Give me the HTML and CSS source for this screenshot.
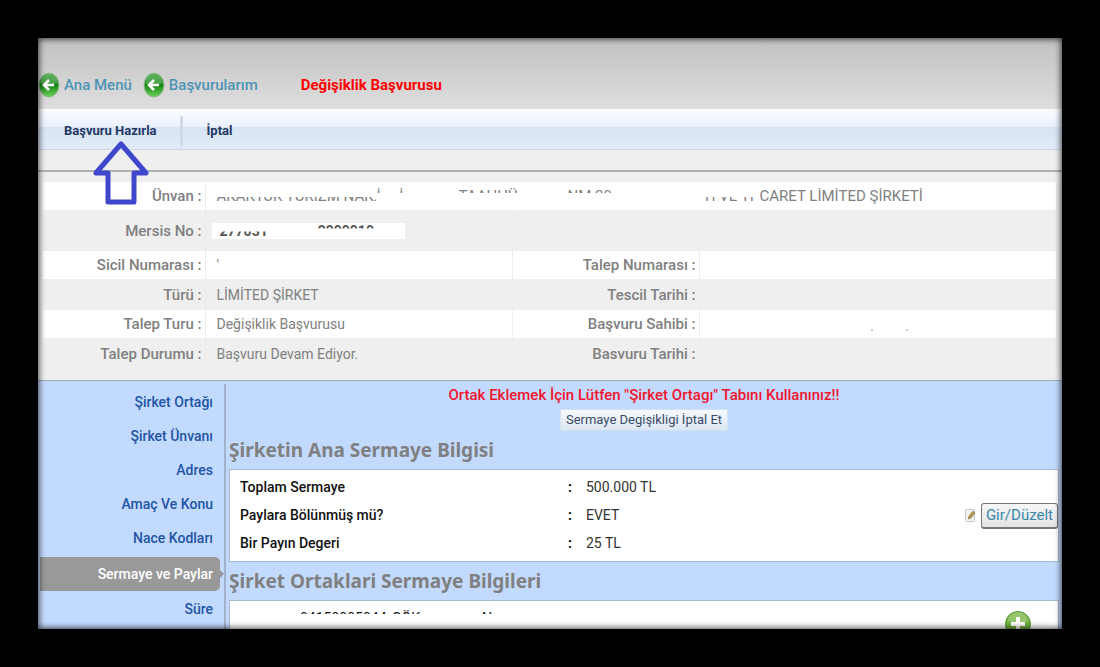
FILE: index.html
```html
<!DOCTYPE html>
<html lang="tr">
<head>
<meta charset="utf-8">
<title>Değişiklik Başvurusu</title>
<link rel="stylesheet" href="styles.css">
</head>
<body>
<svg class="defs" width="0" height="0" aria-hidden="true">
  <defs>
    <linearGradient id="ball" x1="0" y1="0" x2="0" y2="1">
      <stop offset="0" stop-color="#2f9a2c"/><stop offset="0.5" stop-color="#168516"/><stop offset="1" stop-color="#6fd35c"/>
    </linearGradient>
    <symbol id="back" viewBox="0 0 22 26">
      <ellipse cx="11" cy="13" rx="10" ry="12" fill="url(#ball)" stroke="#8fb98a" stroke-width="1"/>
      <path d="M2 11a9 10 0 0 1 18 0Q11 15 2 11Z" fill="#fff" opacity=".22"/>
      <path d="M16 13H7M11 8l-5 5 5 5" fill="none" stroke="#fff" stroke-width="2.6"/>
    </symbol>
  </defs>
</svg>
<main class="frame">
  <header class="top">
    <a href="#"><svg class="ball"><use href="#back"/></svg>Ana Menü</a>
    <a href="#"><svg class="ball"><use href="#back"/></svg>Başvurularım</a>
    <h1>Değişiklik Başvurusu</h1>
  </header>
  <nav class="toolbar">
    <button type="button">Başvuru Hazırla</button>
    <button type="button">İptal</button>
    <svg class="pointer" viewBox="0 0 56 66" aria-hidden="true"><path d="M28 4 53 33H41V62H15V33H3Z" fill="none" stroke="#3f48cc" stroke-width="5" stroke-linejoin="round"/></svg>
  </nav>
  <section class="info">
    <table>
      <colgroup><col class="c1"><col class="c2"><col class="c3"><col></colgroup>
      <tr class="white"><th>Ünvan :</th><td colspan="3">
        <div class="company"><span class="low n1">AKAKYUK TURİZM NAK.</span><span class="mark n2">İ &nbsp; &nbsp; İ</span><span class="mark n3">TAAHHÜ</span><span class="mark n4">.NM 20</span><span class="low n5">Tİ VE Tİ</span><span>CARET LİMİTED ŞİRKETİ</span></div></td></tr>
      <tr class="tall"><th>Mersis No :</th><td><div class="erased"><span class="low">277031</span><span class="top-edge">2200010</span></div></td><td colspan="2"></td></tr>
      <tr class="white"><th>Sicil Numarası :</th><td>'</td><th>Talep Numarası :</th><td></td></tr>
      <tr><th>Türü :</th><td>LİMİTED ŞİRKET</td><th>Tescil Tarihi :</th><td></td></tr>
      <tr class="white"><th>Talep Turu :</th><td>Değişiklik Başvurusu</td><th>Başvuru Sahibi :</th><td><svg class="dots" viewBox="0 0 220 14"><path d="M161 12v2M196 12v2" stroke="#999"/></svg></td></tr>
      <tr><th>Talep Durumu :</th><td>Başvuru Devam Ediyor.</td><th>Basvuru Tarihi :</th><td></td></tr>
    </table>
  </section>
  <div class="body">
    <nav class="side">
      <a href="#">Şirket Ortağı</a>
      <a href="#">Şirket Ünvanı</a>
      <a href="#">Adres</a>
      <a href="#">Amaç Ve Konu</a>
      <a href="#">Nace Kodları</a>
      <a href="#" class="active">Sermaye ve Paylar</a>
      <a href="#">Süre</a>
    </nav>
    <section class="content">
      <p class="warn">Ortak Eklemek İçin Lütfen "Şirket Ortagı" Tabını Kullanınız!!</p>
      <button type="button" class="cancel">Sermaye Degişikligi İptal Et</button>
      <h2>Şirketin Ana Sermaye Bilgisi</h2>
      <div class="box">
        <dl>
          <dt>Toplam Sermaye</dt><dd class="colon">:</dd><dd>500.000 TL</dd>
          <dt>Paylara Bölünmüş mü?</dt><dd class="colon">:</dd><dd>EVET</dd>
          <dt>Bir Payın Degeri</dt><dd class="colon">:</dd><dd>25 TL</dd>
        </dl>
        <svg class="note" viewBox="0 0 11 13" aria-hidden="true"><rect x=".5" y=".5" width="9" height="12" rx="1" fill="#f4f4f4" stroke="#c4c8cc"/><path d="M3 10 4 7 8 2 10 4 6 9Z" fill="#b89a4a" stroke="#77683a" stroke-width=".6"/></svg>
        <button type="button" class="edit">Gir/Düzelt</button>
      </div>
      <h2>Şirket Ortaklari Sermaye Bilgileri</h2>
      <div class="box partners">
        <div class="partner"><span class="sliver p1">04150005044</span><span class="sliver p2">GÖK</span><span class="sliver">N</span></div>
        <svg class="plus" viewBox="0 0 28 28" role="img" aria-label="Ekle"><circle cx="14" cy="14" r="12.5" fill="#72b23e" stroke="#579a2d"/><path d="M4 11a10 9 0 0 1 20 0Q14 15 4 11Z" fill="#fff" opacity=".25"/><path d="M14 7v14M7 14h14" stroke="#fff" stroke-width="4"/></svg>
      </div>
    </section>
  </div>
</main>
</body>
</html>
```

FILE: styles.css
```css
* { box-sizing: border-box; }
body {
  margin: 0;
  padding: 38px;
  height: 100vh;
  display: flex;
  background: #000;
  color: #808080;
  font-family: Roboto, "Liberation Sans", sans-serif;
  font-size: 14px;
  line-height: 20px;
}
.defs { position: absolute; }
a { text-decoration: none; }
button { font: inherit; border: 0; background: none; cursor: pointer; }
.frame {
  flex: 1;
  min-width: 0;
  position: relative;
  display: flex;
  flex-direction: column;
  overflow: hidden;
  background: #efefef;
}
.frame::after {
  content: "";
  position: absolute;
  inset: 0;
  box-shadow: inset 0 0 6px 1px rgba(0, 0, 0, .75);
  pointer-events: none;
}
.top {
  flex: none;
  display: flex;
  align-items: center;
  height: 71px;
  padding-top: 22px;
  background: linear-gradient(#c2c2c2, #cbcbcb 35%, #dedede);
}
.top a {
  display: flex;
  align-items: center;
  gap: 4px;
  margin-right: 11px;
  color: #4d94b4;
  font-size: 15px;
  font-weight: 500;
}
.ball { width: 22px; height: 26px; }
h1 {
  margin: 0 0 0 32px;
  color: #f00;
  font-size: 15px;
  font-weight: bold;
}
.toolbar {
  flex: none;
  position: relative;
  display: flex;
  align-items: center;
  height: 41px;
  padding: 4px 0 0 6px;
  border-bottom: 1px solid #cbd8e6;
  background: linear-gradient(#fafdff, #e9f2fd 45%, #d8e4f4 46%, #e2ecf8);
}
.toolbar button {
  height: 30px;
  padding: 0 23px 0 20px;
  color: #1f3864;
  font-size: 13px;
  font-weight: bold;
}
.toolbar button + button { padding-left: 24px; border-left: 3px solid #d0d9e6; }
.pointer {
  position: absolute;
  left: 55px;
  top: 31px;
  width: 56px;
  height: 66px;
  z-index: 1;
}
.info {
  flex: none;
  margin-top: 20px;
  padding: 10px 5px 11px 5px;
  border-top: 2px solid #b0b0b0;
}
table { width: 100%; border-collapse: collapse; table-layout: fixed; }
.c1 { width: 162px; }
.c2 { width: 307px; }
.c3 { width: 187px; }
tr { height: 31px; }
tr.white { height: 28px; background: #fff; }
tr.tall { height: 41px; }
th, td { padding: 0; }
th {
  padding-right: 3px;
  text-align: right;
  font-size: 15px;
  font-weight: 500;
  border-right: 1px solid #ececec;
}
td { padding-left: 11px; border-right: 1px solid #ececec; }
.company, .erased, .partner { display: flex; white-space: nowrap; }
.company { font-size: 15px; }
.low { clip-path: inset(11px 0 0 0); }
.mark { clip-path: inset(0 0 13px 0); }
.top-edge { clip-path: inset(0 0 12px 0); }
.sliver { clip-path: inset(0 0 14px 0); }
.n1 { width: 160px; }
.n2 { width: 82px; }
.n3 { width: 105px; }
.n4 { width: 139px; }
.n5 { width: 57px; }
.erased {
  align-items: center;
  width: 193px;
  margin-left: -5px;
  padding-left: 8px;
  gap: 50px;
  height: 16px;
  background: #fff;
  color: #555;
  font-weight: bold;
}
.dots { display: block; width: 220px; height: 14px; }
.body {
  flex: 1;
  min-height: 0;
  display: flex;
  border-top: 1px solid #9fa9b8;
  background: #c3daff;
}
.side {
  width: 188px;
  flex: none;
  margin-top: 3px;
  padding: 1px 4px 0 2px;
  border-right: 2px solid #a3b2cc;
}
.side a {
  display: block;
  padding-right: 7px;
  line-height: 34px;
  text-align: right;
  font-weight: 500;
  color: #2255a4;
}
.side .active {
  position: relative;
  margin: 2px 0 1px;
  border-radius: 0 5px 5px 0;
  background: #999;
  color: #fff;
}
.side .active::after {
  content: "";
  position: absolute;
  left: 100%;
  top: 13px;
  border: 4px solid transparent;
  border-left-color: #999;
  border-right: 0;
}
.content {
  flex: 1;
  min-width: 0;
  display: flex;
  flex-direction: column;
  padding: 4px 3px 0;
}
.warn { margin: 0; text-align: center; color: #f0142c; font-size: 15px; font-weight: 500; }
.cancel {
  align-self: center;
  height: 25px;
  margin: 4px 0 0;
  padding: 0 5px;
  border: 1px solid #d3e2f2;
  background: linear-gradient(#f5f9fd, #e9f1f9 50%, #dbe7f3);
  color: #3b4a66;
  font-size: 13px;
}
h2 {
  margin: 0;
  padding: 7px 0 6px;
  font: bold 19px/25px "Noto Sans", "DejaVu Sans", sans-serif;
}
.box {
  flex: none;
  display: flex;
  align-items: center;
  border: 1px solid #a6b8d4;
  background: #fff;
  color: #111;
}
dl {
  flex: 1;
  display: grid;
  grid-template-columns: 328px 18px 1fr;
  margin: 0;
  padding: 3px 0 4px 10px;
  line-height: 28px;
}
dt { font-weight: 500; }
dd { margin: 0; color: #333; }
.colon { color: #111; font-weight: bold; }
.note { width: 11px; height: 13px; margin-right: 5px; }
.edit {
  height: 26px;
  padding: 0 4px;
  border: 1px solid #777;
  border-bottom-width: 2px;
  border-radius: 3px;
  background: linear-gradient(#f7f7f7, #e3e3e3);
  color: #3a87ad;
  font-size: 15px;
}
.partners {
  align-items: flex-start;
  justify-content: space-between;
  padding: 7px 26px 0 70px;
}
.p1 { width: 92px; }
.p2 { width: 90px; }
.plus { width: 28px; height: 28px; margin-top: 2px; }
```
